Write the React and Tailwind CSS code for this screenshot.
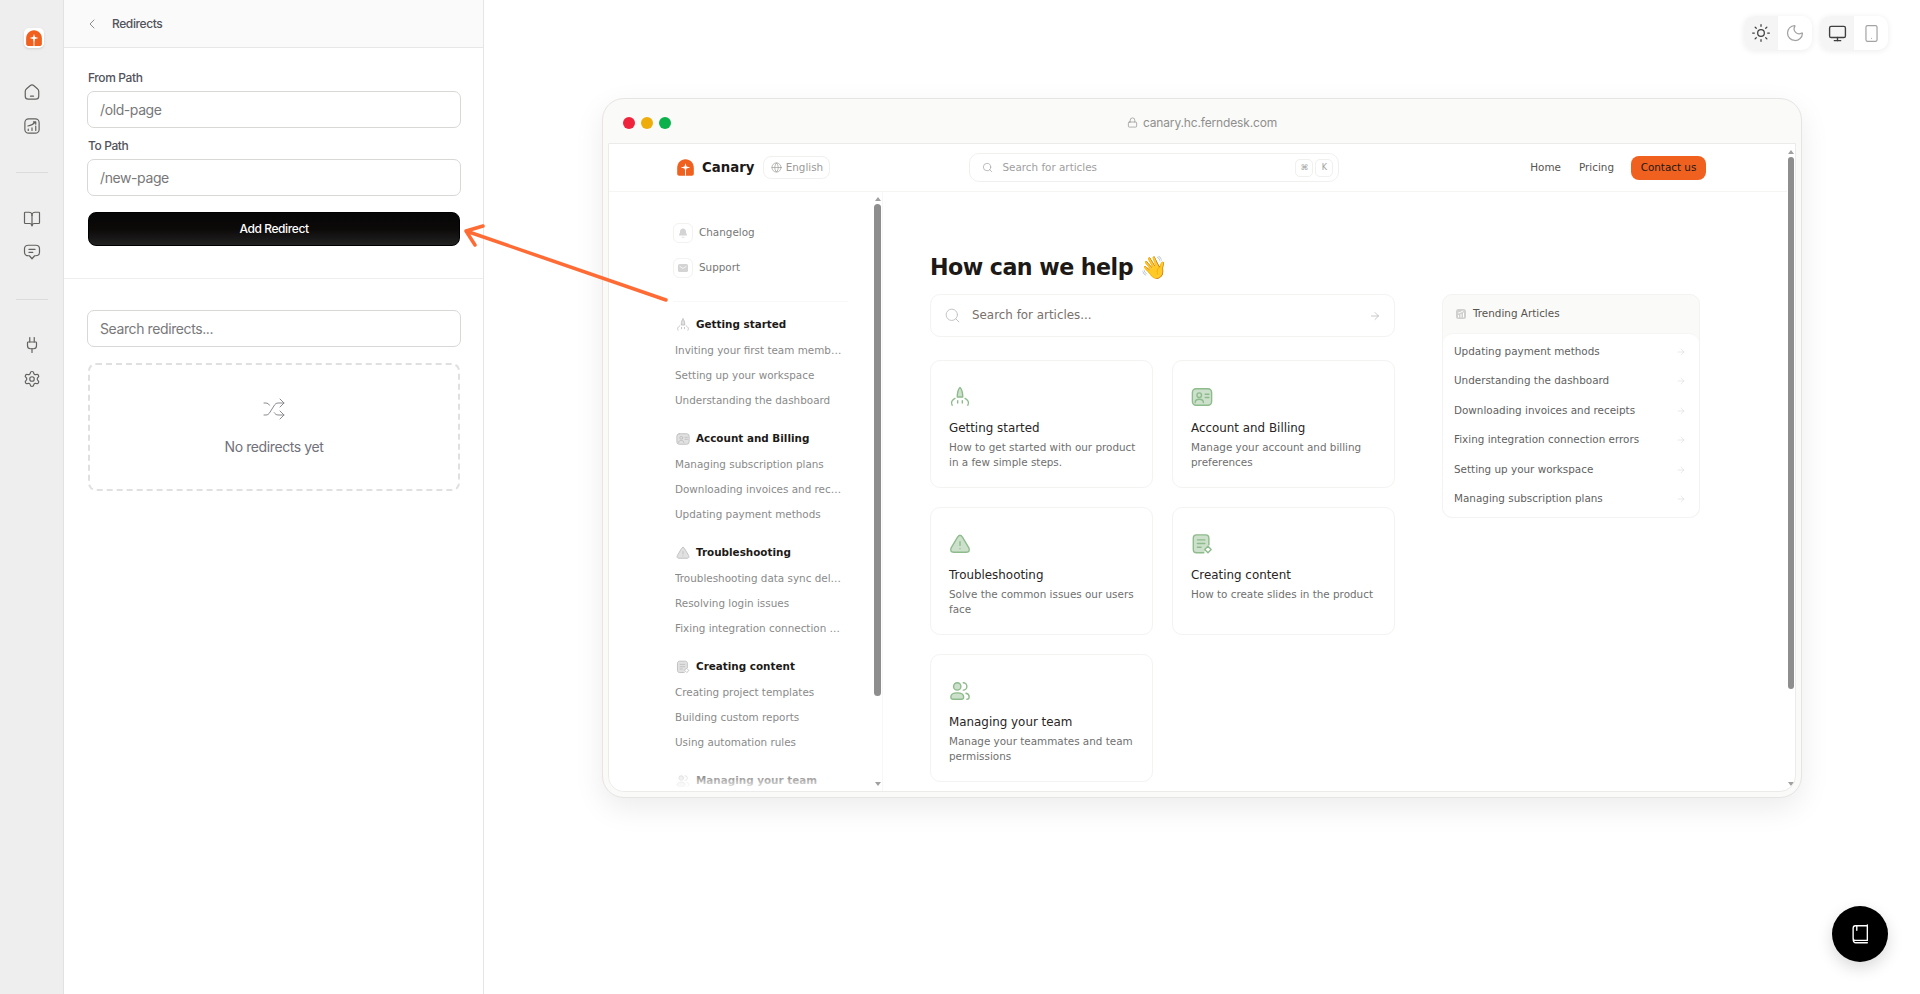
import React from 'react';
import {ArrowRight, BookOpen, ChevronLeft, Globe, Lock, Monitor, Moon, Plug, Search, Settings, Shuffle, Smartphone, Sun} from 'lucide-react';

const Logo = ({className}) => (
    <svg viewBox="0 0 24 24" className={className}>
        <path d="M12 1.500C5.800 1.500 1.500 6.500 1.500 12.500V20c0 1.400 1.100 2.500 2.500 2.500h16c1.400 0 2.500-1.100 2.500-2.500v-7.500C22.500 6.500 18.200 1.500 12 1.500z" fill="#f0611f"/>
        <path d="M12 6.500l1.300 4.200 4.700 1.300-4.700 1.300L12 17.500l-1.300-4.200L6 12l4.700-1.300z" fill="#fff"/>
        <path d="M11.400 13h1.200v9.500h-1.200z" fill="#fff"/>
    </svg>
);

const HomeIcon = () => (
    <svg viewBox="0 0 24 24" className="w-[18px] h-[18px]" fill="none" stroke="currentColor" strokeWidth="1.600" strokeLinecap="round" strokeLinejoin="round">
        <path d="M12 2.500c-1 0-1.800.5-2.600 1.200L4.800 7.600C3.700 8.500 3 9.700 3 11.100v6.400C3 20 5 21.500 7 21.500h10c2 0 4-1.500 4-4v-6.400c0-1.400-.7-2.600-1.800-3.500l-4.600-3.900C13.800 3 13 2.500 12 2.500z"/>
        <path d="M10 17.500h4"/>
    </svg>
);

const ChartIcon = () => (
    <svg viewBox="0 0 24 24" className="w-[18px] h-[18px]" fill="none" stroke="currentColor" strokeWidth="1.600" strokeLinecap="round" strokeLinejoin="round">
        <rect x="2.500" y="2.500" width="19" height="19" rx="5"/>
        <path d="M7 18v-2M12 18v-3.500M17 18v-6M6.500 12c4-.5 7.500-2.500 10-5.500M14 6.500h3v3"/>
    </svg>
);

const ChatIcon = () => (
    <svg viewBox="0 0 24 24" className="w-[18px] h-[18px]" fill="none" stroke="currentColor" strokeWidth="1.600" strokeLinecap="round" strokeLinejoin="round">
        <path d="M7 3h10c2.800 0 5 2 5 4.800v4.400c0 2.800-2.200 4.800-5 4.800h-1.500L12 21l-3.500-4H7c-2.800 0-5-2-5-4.800V7.800C2 5 4.200 3 7 3z"/>
        <path d="M8 8.500h8M8 12.500h5"/>
    </svg>
);

const BellIcon = ({className}) => (
    <svg viewBox="0 0 24 24" className={className} fill="currentColor">
        <path d="M12 3c-3.800 0-6 3-6 6.500 0 3-1.500 4.500-2 6-.3 1 .4 1.500 1.300 1.500h13.400c.9 0 1.600-.5 1.300-1.500-.5-1.500-2-3-2-6C18 6 15.800 3 12 3z"/>
        <path d="M10 20.500h4" stroke="currentColor" strokeWidth="1.500" strokeLinecap="round"/>
    </svg>
);

const MailIcon = ({className}) => (
    <svg viewBox="0 0 24 24" className={className}>
        <rect x="2" y="4" width="20" height="16" rx="3" fill="currentColor"/>
        <path d="M6 9l6 4 6-4" fill="none" stroke="#fff" strokeWidth="1.500" strokeLinecap="round" strokeLinejoin="round"/>
    </svg>
);

const RocketIcon = ({className}) => (
    <svg viewBox="0 0 24 24" className={className} fill="none" stroke="currentColor" strokeWidth="1.500" strokeLinecap="round" strokeLinejoin="round">
        <path d="M12 1.500c-1.500 1.500-3 4.500-3 10.500h6c0-6-1.500-9-3-10.500z" fill="currentColor" fillOpacity=".45"/>
        <path d="M6.500 13.500C3.500 15 1.500 18 3.500 21M17.500 13.500c3 1.500 5 4.500 3 7.500M9.500 16v2.500M14.500 16v2.500"/>
    </svg>
);

const CardIcon = ({className}) => (
    <svg viewBox="0 0 24 24" className={className} fill="none" stroke="currentColor" strokeWidth="1.500" strokeLinecap="round" strokeLinejoin="round">
        <rect x="1.500" y="3" width="21" height="18" rx="4" fill="currentColor" fillOpacity=".45"/>
        <circle cx="9" cy="10" r="2.500"/>
        <path d="M4.500 18c0-2.500 2-3.500 4.500-3.500s4.500 1 4.500 3.500M15.500 9h4M15.500 12.500h4"/>
    </svg>
);

const WarningIcon = ({className}) => (
    <svg viewBox="0 0 24 24" className={className} fill="none" stroke="currentColor" strokeWidth="1.500" strokeLinecap="round" strokeLinejoin="round">
        <path d="M12 2.500c-1.200 0-2 .8-3 2.500L2.500 16c-1.500 2.800-.5 5 2.500 5h14c3 0 4-2.200 2.500-5L15 5c-1-1.700-1.800-2.500-3-2.500z" fill="currentColor" fillOpacity=".45"/>
        <path d="M12 9.500v4M12 17v.1"/>
    </svg>
);

const DocIcon = ({className}) => (
    <svg viewBox="0 0 24 24" className={className} fill="none" stroke="currentColor" strokeWidth="1.500" strokeLinecap="round" strokeLinejoin="round">
        <path d="M14 21.500H6c-2 0-3.500-1.500-3.500-3.500V5.500c0-2 1.500-3.500 3.500-3.500h10c2 0 3.500 1.500 3.500 3.500V13" fill="currentColor" fillOpacity=".45"/>
        <path d="M7 7.500h8M7 11.500h8M7 15.500h4"/>
        <path d="M18.500 14.500l3.500 3.500-3.500 3.500L15 18z" fill="#fff"/>
    </svg>
);

const UsersIcon = ({className}) => (
    <svg viewBox="0 0 24 24" className={className} fill="none" stroke="currentColor" strokeWidth="1.500" strokeLinecap="round" strokeLinejoin="round">
        <circle cx="9" cy="7" r="4" fill="currentColor" fillOpacity=".45"/>
        <path d="M15.500 3a4 4 0 0 1 0 8"/>
        <path d="M2 18.500c0-3 3-4.500 7-4.500s7 1.500 7 4.500c0 1.500-1 2.500-2.500 2.500h-9C3 21 2 20 2 18.500z" fill="currentColor" fillOpacity=".45"/>
        <path d="M18.500 14.500c2 .5 3.500 2 3.500 4s-1 2.500-2.500 2.500"/>
    </svg>
);

const TrendIcon = ({className}) => (
    <svg viewBox="0 0 24 24" className={className} fill="none" strokeLinecap="round">
        <rect x="2" y="2" width="20" height="20" rx="5" fill="currentColor"/>
        <path d="M7 18v-3M12 18v-5M17 18v-8M7 10c3-.5 6-2 9-4" stroke="#fff" strokeWidth="2"/>
    </svg>
);

const sections = [
    {title: "Getting started", Icon: RocketIcon, items: ["Inviting your first team members", "Setting up your workspace", "Understanding the dashboard"]},
    {title: "Account and Billing", Icon: CardIcon, items: ["Managing subscription plans", "Downloading invoices and receipts", "Updating payment methods"]},
    {title: "Troubleshooting", Icon: WarningIcon, items: ["Troubleshooting data sync delays", "Resolving login issues", "Fixing integration connection errors"]},
    {title: "Creating content", Icon: DocIcon, items: ["Creating project templates", "Building custom reports", "Using automation rules"]},
    {title: "Managing your team", Icon: UsersIcon, items: []},
];

const cards = [
    {title: "Getting started", text: "How to get started with our product in a few simple steps.", Icon: RocketIcon},
    {title: "Account and Billing", text: "Manage your account and billing preferences", Icon: CardIcon},
    {title: "Troubleshooting", text: "Solve the common issues our users face", Icon: WarningIcon},
    {title: "Creating content", text: "How to create slides in the product", Icon: DocIcon},
    {title: "Managing your team", text: "Manage your teammates and team permissions", Icon: UsersIcon},
];

const trending = ["Updating payment methods", "Understanding the dashboard", "Downloading invoices and receipts", "Fixing integration connection errors", "Setting up your workspace", "Managing subscription plans"];

const Rail = () => (
    <div className="w-[64px] shrink-0 h-full bg-[#eeeeee] border-r border-[#e2e2e2] flex flex-col items-center text-[#62625f]">
        <div className="mt-[28px] ml-[4px] w-[20px] h-[20px] bg-white rounded-[5px] flex items-center justify-center shadow-sm">
            <Logo className="w-[18px] h-[18px]"/>
        </div>
        <div className="mt-[35px]"><HomeIcon/></div>
        <div className="mt-[16px]"><ChartIcon/></div>
        <div className="mt-[37px] w-[32px] border-t border-[#dcdcdc]"/>
        <div className="mt-[37px]"><BookOpen className="w-[18px] h-[18px]" strokeWidth={1.600}/></div>
        <div className="mt-[15px]"><ChatIcon/></div>
        <div className="mt-[38px] w-[32px] border-t border-[#dcdcdc]"/>
        <div className="mt-[36px]"><Plug className="w-[18px] h-[18px]" strokeWidth={1.600}/></div>
        <div className="mt-[16px]"><Settings className="w-[18px] h-[18px]" strokeWidth={1.600}/></div>
    </div>
);

const Field = ({label, placeholder}) => (
    <div>
        <div className="text-[12px] leading-[14px] font-medium text-[#52525b]">{label}</div>
        <div className="mt-[6px] -mx-px h-[37px] px-[12px] flex items-center border border-[#d8d8d6] rounded-[7px] text-[14px] text-[#78787a]">{placeholder}</div>
    </div>
);

const Panel = () => (
    <div className="w-[420px] shrink-0 h-full bg-white border-r border-[#e5e5e5] font-['Inter',sans-serif] tracking-tight">
        <div className="h-[48px] bg-[#fafafa] border-b border-[#e7e7e7] flex items-center pl-[20px] gap-[10px]">
            <ChevronLeft className="w-[16px] h-[16px] text-[#777]" strokeWidth={1.250}/>
            <span className="ml-[2px] text-[12px] font-medium text-[#52525b]">Redirects</span>
        </div>
        <div className="h-[231px] border-b border-[#eeeeee] pt-[23px] pl-[24px] pr-[23px] flex flex-col gap-[11px]">
            <Field label="From Path" placeholder="/old-page"/>
            <Field label="To Path" placeholder="/new-page"/>
            <button className="mt-[5px] h-[34px] rounded-[8px] bg-gradient-to-b from-[#060606] via-[#0c0a09] to-[#222] border border-black text-white text-[12px] font-medium">Add Redirect</button>
        </div>
        <div className="pl-[24px] pr-[23px] pt-[31px]">
            <div className="-mx-px h-[37px] px-[12px] flex items-center border border-[#d8d8d6] rounded-[7px] text-[14px] text-[#78787a]">Search redirects...</div>
            <div className="mt-[16px] h-[128px] border-2 border-dashed border-[#e0e0e0] rounded-[8px] flex flex-col items-center text-[#71717a]">
                <Shuffle className="mt-[32px] w-[24px] h-[24px] text-[#8a8a90]" strokeWidth={1}/>
                <div className="mt-[16px] text-[14px] leading-[20px]">No redirects yet</div>
            </div>
        </div>
    </div>
);

const Scroll = ({thumb, className}) => (
    <div className={className}>
        <div className="flex flex-col items-center w-[7px] h-full">
            <div className="w-0 h-0 border-x-[3px] border-x-transparent border-b-[4px] border-b-[#a0a0a0]"/>
            <div className={thumb}/>
            <div className="mt-auto mb-[5px] w-0 h-0 border-x-[3px] border-x-transparent border-t-[4px] border-t-[#a0a0a0]"/>
        </div>
    </div>
);

const SiteHeader = () => (
    <div className="h-[48px] shrink-0 border-b border-[#f5f5f4] flex items-center pl-[67px] pr-[81px]">
        <Logo className="w-[19px] h-[19px]"/>
        <span className="ml-[7px] text-[13.300px] font-bold text-[#1c1917]">Canary</span>
        <div className="ml-[9px] h-[23px] w-[67px] border border-[#f0f0ef] rounded-[8px] flex items-center justify-center gap-[4px] text-[10.400px] text-[#9a9a98]">
            <Globe className="w-[11px] h-[11px]" strokeWidth={1.500}/>
            English
        </div>
        <div className="ml-[139px] h-[29px] w-[370px] border border-[#f0f0ef] rounded-[10px] flex items-center pl-[12px] pr-[5px] text-[10.400px] text-[#a0a0a0]">
            <Search className="w-[11px] h-[11px]" strokeWidth={1.500}/>
            <span className="ml-[9px]">Search for articles</span>
            <div className="ml-auto flex gap-[2px]">
                <span className="w-[18px] h-[18px] border border-[#f0f0ef] rounded-[5px] flex items-center justify-center text-[8px]">⌘</span>
                <span className="w-[18px] h-[18px] border border-[#f0f0ef] rounded-[5px] flex items-center justify-center text-[8px]">K</span>
            </div>
        </div>
        <div className="ml-auto flex items-center text-[10.400px] text-[#57534e]">
            <span>Home</span>
            <span className="ml-[18px]">Pricing</span>
            <span className="ml-[17px] h-[24px] w-[75px] rounded-[8px] bg-[#f0611f] text-[#1c1917] flex items-center justify-center">Contact us</span>
        </div>
    </div>
);

const SideNav = () => (
    <div className="w-[274px] shrink-0 h-full border-r border-[#f7f7f6] flex overflow-hidden relative">
        <div className="w-[265px] pl-[64px] pr-[25px] pt-[31px] overflow-hidden">
            <div className="flex items-center gap-[6px] h-[20px] text-[10.400px] text-[#777]">
                <span className="w-[20px] h-[20px] border border-[#f2f2f1] rounded-[6px] flex items-center justify-center"><BellIcon className="w-[12px] h-[12px] text-[#d4d4d4]"/></span>
                Changelog
            </div>
            <div className="mt-[15px] flex items-center gap-[6px] h-[20px] text-[10.400px] text-[#777]">
                <span className="w-[20px] h-[20px] border border-[#f2f2f1] rounded-[6px] flex items-center justify-center"><MailIcon className="w-[12px] h-[12px] text-[#d4d4d4]"/></span>
                Support
            </div>
            <div className="mt-[23px] w-[175px] border-t border-[#f7f7f6]"/>
            <div className="mt-[15px] flex flex-col gap-[18px]">
                {sections.map((section, index) => (
                    <div key={index}>
                        <div className="h-[16px] flex items-center pl-[3px] text-[10.400px] font-bold text-[#1c1917]">
                            <section.Icon className="w-[14px] h-[14px] text-[#bdbdbd]"/>
                            <span className="ml-[6px]">{section.title}</span>
                        </div>
                        {section.items.length > 0 && (
                            <div className="mt-[5px] flex flex-col">
                                {section.items.map((item, i) => (
                                    <div key={i} className="ml-[2px] h-[25px] leading-[25px] w-[167px] truncate text-[10.400px] text-[#8a8a8a]">{item}</div>
                                ))}
                            </div>
                        )}
                    </div>
                ))}
            </div>
        </div>
        <Scroll className="h-full pt-[5px]" thumb="mt-[3px] w-[7px] h-[492px] rounded-full bg-[#8e8e8e]"/>
        <div className="absolute left-0 right-[10px] bottom-0 h-[30px] bg-gradient-to-t from-white to-transparent"/>
    </div>
);

const Main = () => (
    <div className="flex-1 pl-[47px] pt-[61px]">
        <h1 className="text-[22.200px] leading-[28px] font-bold tracking-tight text-[#1c1917]">How can we help 👋</h1>
        <div className="mt-[13px] flex">
            <div className="w-[465px] shrink-0">
                <div className="h-[43px] border border-[#f3f3f2] rounded-[10px] flex items-center pl-[13px] pr-[13px] text-[11.900px] text-[#78716c]">
                    <Search className="w-[17px] h-[17px] text-[#bdbdbd]" strokeWidth={1.250}/>
                    <span className="ml-[11px]">Search for articles...</span>
                    <ArrowRight className="ml-auto w-[12px] h-[12px] text-[#a8a8a8]" strokeWidth={1.250}/>
                </div>
                <div className="mt-[23px] grid grid-cols-2 gap-[19px] auto-rows-[128px]">
                    {cards.map((card, index) => (
                        <div key={index} className="border border-[#f3f3f2] rounded-[10px] pl-[18px] pr-[14px] pt-[25px]">
                            <card.Icon className="w-[22px] h-[22px] text-[#8dbb8b]"/>
                            <div className="mt-[12px] text-[11.900px] leading-[16px] text-[#292524]">{card.title}</div>
                            <div className="mt-[4px] text-[10.400px] leading-[15px] text-[#6f6f6f]">{card.text}</div>
                        </div>
                    ))}
                </div>
            </div>
            <div className="ml-[47px] w-[258px] h-[224px] border border-[#f3f3f2] rounded-[10px] bg-[#fafaf9] flex flex-col">
                <div className="h-[38px] shrink-0 flex items-center pl-[12px] text-[10.400px] text-[#57534e]">
                    <TrendIcon className="w-[12px] h-[12px] text-[#d0d0ce]"/>
                    <span className="ml-[6px]">Trending Articles</span>
                </div>
                <div className="flex-1 bg-white rounded-[10px] border-t border-[#f5f5f4] pt-[3px] flex flex-col">
                    {trending.map((item, index) => (
                        <div key={index} className="h-[29.500px] flex items-center pl-[11px] pr-[13px] text-[10.400px] text-[#5f5f5f]">
                            {item}
                            <ArrowRight className="ml-auto w-[10px] h-[10px] text-[#d6d6d6]" strokeWidth={1.250}/>
                        </div>
                    ))}
                </div>
            </div>
        </div>
    </div>
);

const BrowserWindow = () => (
    <div className="w-[1200px] h-[700px] mx-auto bg-[#fafaf9] border border-[#e7e5e4] rounded-[22px] shadow-[0_10px_30px_rgba(0,0,0,0.08)] flex flex-col px-[5px] pb-[5px] font-['DejaVu_Sans',sans-serif]">
        <div className="h-[44px] shrink-0 pt-[3px] flex items-center relative">
            <div className="pl-[15px] flex gap-[6px]">
                <span className="w-[12px] h-[12px] rounded-full bg-[#ef233c]"/>
                <span className="w-[12px] h-[12px] rounded-full bg-[#efad0b]"/>
                <span className="w-[12px] h-[12px] rounded-full bg-[#0cb14b]"/>
            </div>
            <div className="absolute inset-x-0 flex items-center justify-center gap-[5px] text-[12px] tracking-[-0.15px] text-[#8f8f8d] font-['Inter',sans-serif]">
                <Lock className="w-[11px] h-[11px]" strokeWidth={1.500}/>
                canary.hc.ferndesk.com
            </div>
        </div>
        <div className="flex-1 min-h-0 bg-white border border-[#ebebe9] rounded-b-[16px] flex overflow-hidden">
            <div className="flex-1 min-w-0 flex flex-col">
                <SiteHeader/>
                <div className="flex-1 min-h-0 flex">
                    <SideNav/>
                    <Main/>
                </div>
            </div>
            <Scroll className="h-full pt-[6px] mr-[1px]" thumb="mt-[3px] w-[6px] h-[532px] rounded-full bg-[#8e8e8e]"/>
        </div>
    </div>
);

const App = () => {
    return (
        <div className="h-screen w-full overflow-hidden bg-white flex relative">
            <Rail/>
            <Panel/>
            <div className="flex-1 min-w-0 pt-[98px] relative">
                <BrowserWindow/>
                <div className="absolute top-[16px] right-[32px] flex gap-[8px] text-[#3f3f3f]">
                    <div className="flex rounded-[10px] shadow-[0_1px_6px_rgba(0,0,0,0.08)] overflow-hidden bg-white">
                        <span className="w-[34px] h-[34px] bg-[#f5f5f5] flex items-center justify-center"><Sun className="w-[20px] h-[20px]" strokeWidth={1.500}/></span>
                        <span className="w-[34px] h-[34px] flex items-center justify-center text-[#a3a3a3]"><Moon className="w-[20px] h-[20px]" strokeWidth={1.500}/></span>
                    </div>
                    <div className="flex rounded-[10px] shadow-[0_1px_6px_rgba(0,0,0,0.08)] overflow-hidden bg-white">
                        <span className="w-[34px] h-[34px] bg-[#f5f5f5] flex items-center justify-center"><Monitor className="w-[19px] h-[19px]" strokeWidth={1.750}/></span>
                        <span className="w-[34px] h-[34px] flex items-center justify-center text-[#a3a3a3]"><Smartphone className="w-[19px] h-[19px]" strokeWidth={1.500}/></span>
                    </div>
                </div>
                <div className="absolute left-[1348px] top-[906px] w-[56px] h-[56px] rounded-full bg-black shadow-[0_6px_16px_rgba(0,0,0,0.15)] flex items-center justify-center text-white">
                    <svg viewBox="0 0 24 24" className="w-[22px] h-[22px]" fill="none" stroke="currentColor" strokeWidth="1.500" strokeLinecap="round" strokeLinejoin="round">
                        <path d="M20 2v17H7c-1.500 0-2.500-1-2.500-2.500V6C4.500 4 5.500 3 7 3h13M4.500 16.500C4.500 20.500 6 21.500 7.500 21.500H20M8.500 3v5"/>
                    </svg>
                </div>
            </div>
            <svg className="absolute left-0 top-0 w-full h-full pointer-events-none" viewBox="0 0 1920 994" fill="none" stroke="#ff6b35" strokeWidth="3.500" strokeLinecap="round" strokeLinejoin="round">
                <path d="M666 300L466 231M483 226L466 231L475 245"/>
            </svg>
        </div>
    );
};

export default App;
